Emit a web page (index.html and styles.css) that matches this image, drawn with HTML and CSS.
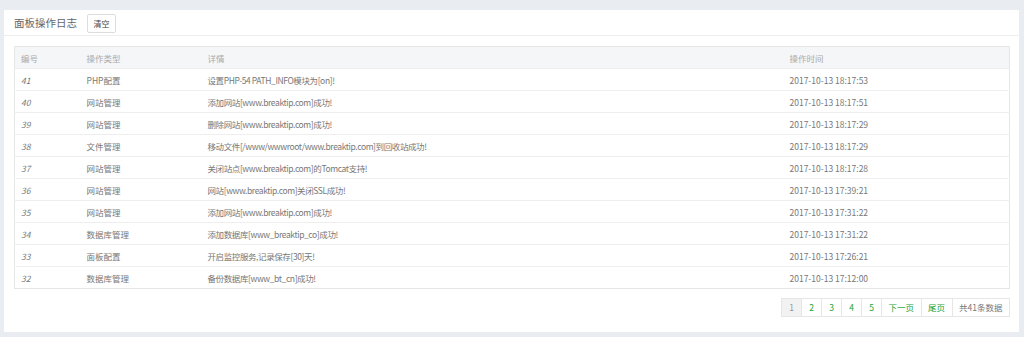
FILE: index.html
```html
<!DOCTYPE html>
<html lang="zh-CN">
<head>
    <meta charset="UTF-8">
    <meta name="viewport" content="width=device-width, initial-scale=1.0">
    <title>面板操作日志</title>
    <link rel="stylesheet" href="styles.css">
</head>
<body>
    <div class="log-panel">
        <div class="panel-head">
            <span class="panel-title">面板操作日志</span>
            <button class="btn-clear">清空</button>
        </div>

        <div class="panel-body">
            <table class="log-table">
                <thead>
                    <tr>
                        <th class="col-id">编号</th>
                        <th class="col-type">操作类型</th>
                        <th class="col-detail">详情</th>
                        <th class="col-time">操作时间</th>
                    </tr>
                </thead>
                <tbody>
                    <tr><td class="log-id">41</td><td>PHP配置</td><td class="log-detail">设置PHP-54 PATH_INFO模块为[on]!</td><td>2017-10-13 18:17:53</td></tr>
                    <tr><td class="log-id">40</td><td>网站管理</td><td class="log-detail">添加网站[www.breaktip.com]成功!</td><td>2017-10-13 18:17:51</td></tr>
                    <tr><td class="log-id">39</td><td>网站管理</td><td class="log-detail">删除网站[www.breaktip.com]成功!</td><td>2017-10-13 18:17:29</td></tr>
                    <tr><td class="log-id">38</td><td>文件管理</td><td class="log-detail">移动文件[/www/wwwroot/www.breaktip.com]到回收站成功!</td><td>2017-10-13 18:17:29</td></tr>
                    <tr><td class="log-id">37</td><td>网站管理</td><td class="log-detail">关闭站点[www.breaktip.com]的Tomcat支持!</td><td>2017-10-13 18:17:28</td></tr>
                    <tr><td class="log-id">36</td><td>网站管理</td><td class="log-detail">网站[www.breaktip.com]关闭SSL成功!</td><td>2017-10-13 17:39:21</td></tr>
                    <tr><td class="log-id">35</td><td>网站管理</td><td class="log-detail">添加网站[www.breaktip.com]成功!</td><td>2017-10-13 17:31:22</td></tr>
                    <tr><td class="log-id">34</td><td>数据库管理</td><td class="log-detail">添加数据库[www_breaktip_co]成功!</td><td>2017-10-13 17:31:22</td></tr>
                    <tr><td class="log-id">33</td><td>面板配置</td><td class="log-detail">开启监控服务,记录保存[30]天!</td><td>2017-10-13 17:26:21</td></tr>
                    <tr><td class="log-id">32</td><td>数据库管理</td><td class="log-detail">备份数据库[www_bt_cn]成功!</td><td>2017-10-13 17:12:00</td></tr>
                </tbody>
            </table>

            <div class="pager">
                <span class="page current">1</span>
                <a class="page" href="#">2</a>
                <a class="page" href="#">3</a>
                <a class="page" href="#">4</a>
                <a class="page" href="#">5</a>
                <a class="page" href="#">下一页</a>
                <a class="page" href="#">尾页</a>
                <span class="page total">共41条数据</span>
            </div>
        </div>
    </div>
</body>
</html>
```

FILE: styles.css
```css
html, body {
    margin: 0;
    padding: 0;
}
body {
    background: #e9ecf0;
    font-family: "Noto Sans CJK SC", "Noto Sans", sans-serif;
    color: #777;
    padding: 10px 5px 5px 4px;
}
.log-panel {
    background: #fff;
    height: 322px;
    box-sizing: border-box;
}
.panel-head {
    height: 25px;
    border-bottom: 1px solid #eee;
    display: flex;
    align-items: center;
    padding: 0 10px;
}
.panel-title {
    font-size: 10.5px;
    color: #666;
    margin-right: 10px;
}
.btn-clear {
    font-family: inherit;
    font-size: 8px;
    color: #444;
    background: #fff;
    border: 1px solid #ddd;
    border-radius: 2px;
    width: 29px;
    height: 19px;
    padding: 0;
    margin-top: 2px;
}
.panel-body {
    padding: 10px 9px 0 10px;
}
.log-table {
    width: 100%;
    table-layout: fixed;
    border-collapse: collapse;
    border: 1px solid #e6e6e6;
    font-size: 8.5px;
}
.log-table th, .log-table td {
    box-sizing: border-box;
    height: 22px;
    padding: 0 6px;
    text-align: left;
    white-space: nowrap;
    border-bottom: 1px solid #eee;
}
.log-table .col-id { width: 66px; }
.log-table .col-type { width: 121px; }
.log-table .col-time { width: 226px; }
.log-table th {
    background: #f5f6f8;
    color: #aaa;
    font-weight: normal;
}
.log-table tbody tr:last-child td {
    border-bottom: none;
}
.log-id {
    font-style: italic;
}
.log-table .log-detail {
    letter-spacing: -0.4px;
}
.pager {
    display: flex;
    justify-content: flex-end;
    margin-top: 9px;
    font-size: 8.5px;
}
.page {
    min-width: 6px;
    padding: 0 6.5px;
    line-height: 17px;
    text-align: center;
    border: 1px solid #e6e6e6;
    border-left: none;
    color: #20a53a;
    text-decoration: none;
}
.page.current {
    border-left: 1px solid #e6e6e6;
    background: #f2f2f2;
    color: #999;
}
.page.total {
    color: #777;
}
```
